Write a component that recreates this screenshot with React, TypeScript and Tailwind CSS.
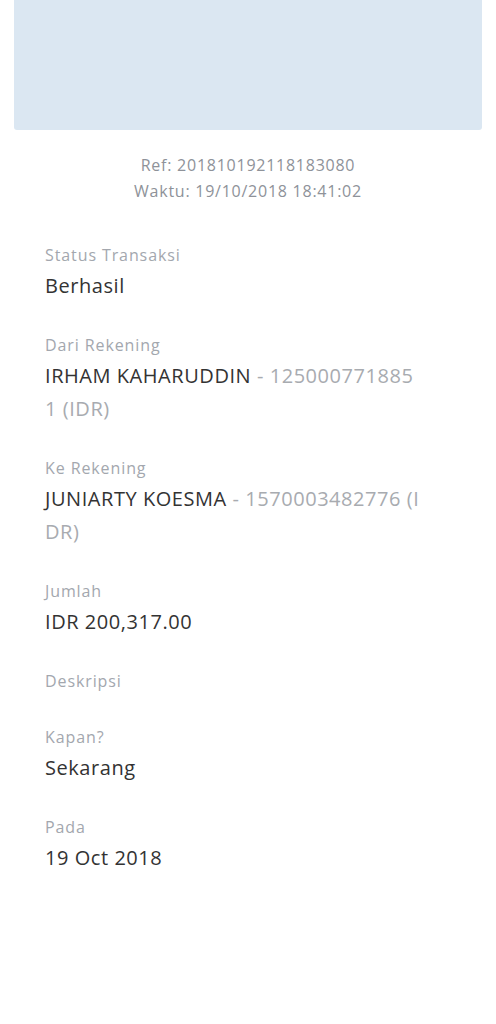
const rows: { label: string; name?: string; detail?: string }[] = [
  { label: 'Status Transaksi', name: 'Berhasil' },
  { label: 'Dari Rekening', name: 'IRHAM KAHARUDDIN', detail: ' - 1250007718851 (IDR)' },
  { label: 'Ke Rekening', name: 'JUNIARTY KOESMA', detail: ' - 1570003482776 (IDR)' },
  { label: 'Jumlah', name: 'IDR 200,317.00' },
  { label: 'Deskripsi' },
  { label: 'Kapan?', name: 'Sekarang' },
  { label: 'Pada', name: '19 Oct 2018' },
]

export default function App() {
  return (
    <div className="min-h-[1024px] w-[496px] bg-white font-['Open_Sans',sans-serif]">
      <div className="mx-[14px] h-[130px] rounded-b-[3px] bg-[#dbe7f2]" />

      {/* reference + time */}
      <div className="mt-[22px] text-center text-[16px] leading-[26px] tracking-[0.75px] text-[#8e9299]">
        <p>Ref: 201810192118183080</p>
        <p>Waktu: 19/10/2018 18:41:02</p>
      </div>

      <div className="mt-[40px] flex flex-col gap-[32px] pl-[45px] pr-[75px]">
        {rows.map((row, i) => (
          <div key={i} className="flex flex-col">
            <p className="text-[16px] leading-[22px] tracking-[0.9px] text-[#a3a7ae]">{row.label}</p>
            {row.name ? (
              <p className="mt-[3px] break-all text-[20px] leading-[33px] tracking-[0.55px] text-[#333333]">
                {row.name}
                {row.detail && <span className="text-[#a8abb0]">{row.detail}</span>}
              </p>
            ) : (
              <div className="h-[2px]" />
            )}
          </div>
        ))}
      </div>
    </div>
  )
}
